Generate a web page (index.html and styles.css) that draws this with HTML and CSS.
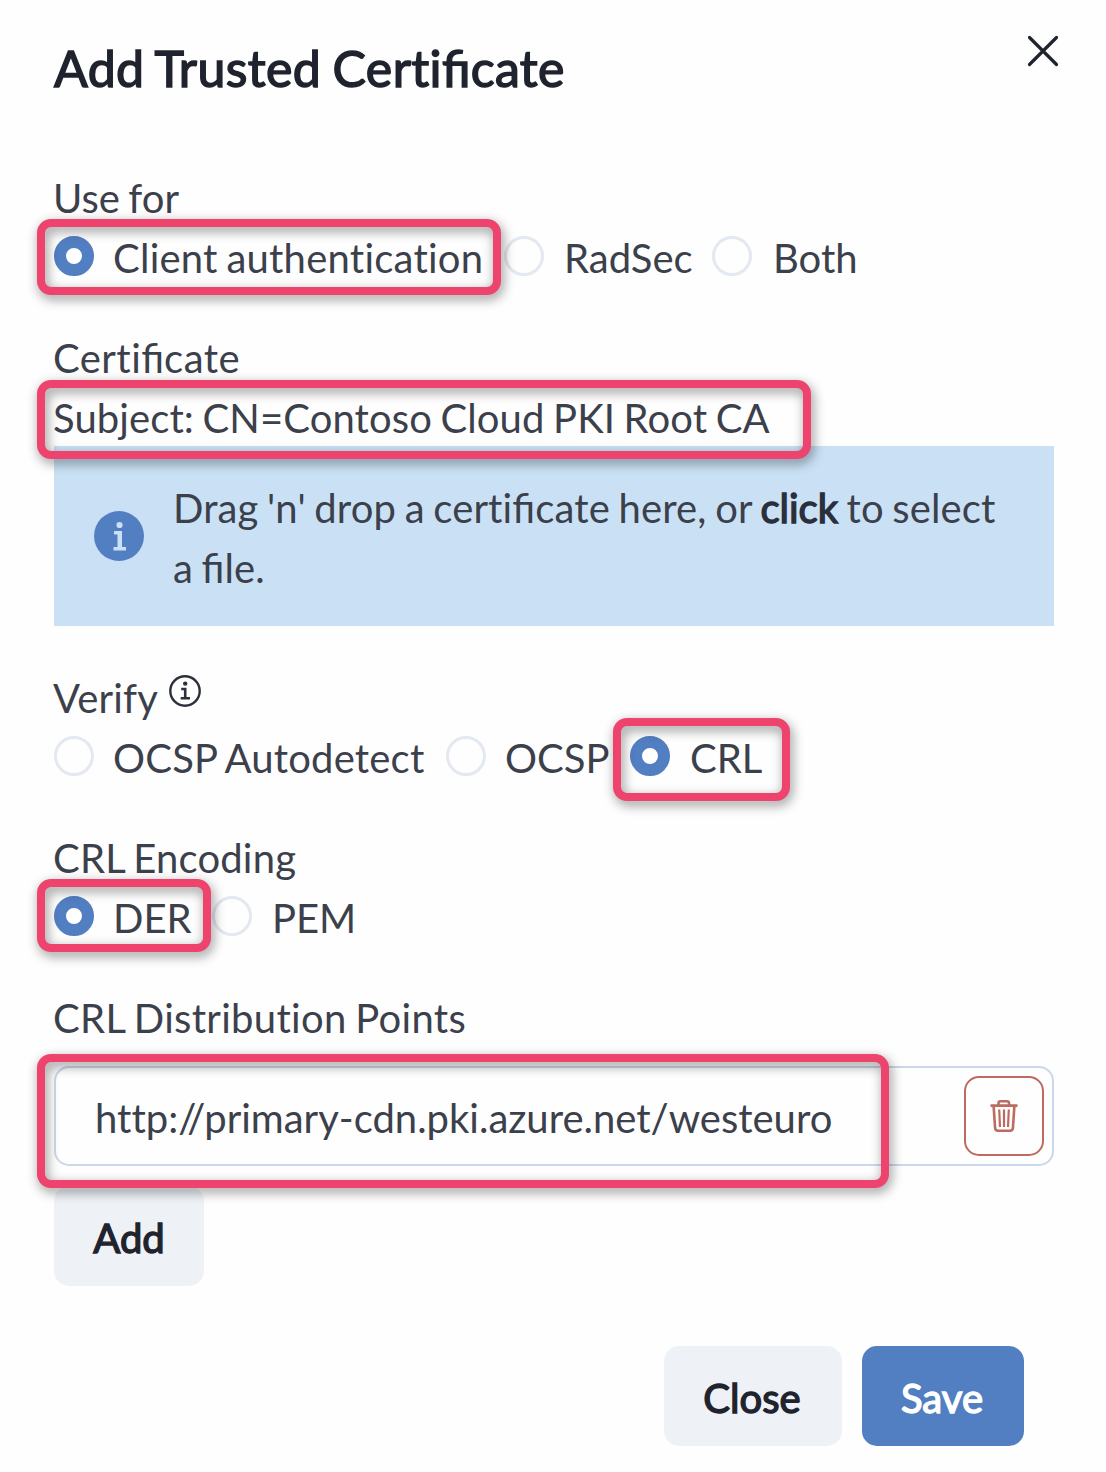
FILE: index.html
```html
<!DOCTYPE html>
<html lang="en">
<head>
<meta charset="utf-8">
<title>Add Trusted Certificate</title>
<link rel="stylesheet" href="styles.css">
</head>
<body>
<main class="dialog">
  <header class="header">
    <h1 class="title">Add Trusted Certi<span class="lig">fi</span>cate</h1>
    <button class="dismiss" aria-label="Close dialog">
      <svg width="32" height="32" viewBox="0 0 32 32"><path d="M2.500 2.500l27 27M29.500 2.500l-27 27"/></svg>
    </button>
  </header>

  <section class="group">
    <div class="label">Use for</div>
    <div class="options">
      <label class="option marked mark-client"><span class="radio on"></span><span class="text w-client">Client authentication</span></label>
      <label class="option"><span class="radio"></span><span class="text w-radsec">RadSec</span></label>
      <label class="option"><span class="radio"></span><span class="text both">Both</span></label>
    </div>
  </section>

  <section class="group">
    <div class="label"><span class="certificate">Certi<span class="lig">fi</span>cate</span></div>
    <div class="subject marked mark-subject">Subject: CN=Contoso Cloud PKI Root CA</div>
    <div class="dropzone">
      <svg class="info" width="50" height="50" viewBox="0 0 50 50"><circle cx="25" cy="25" r="25" fill="#527ec2"/><g fill="#cae1f5"><circle cx="25.500" cy="14" r="3.100"/><path d="M20 20h8v16h4v3.500H19.500V36h4V23.500H20z"/></g></svg>
      <p class="hint">Drag 'n' drop a certi<span class="lig">fi</span>cate here, or <b class="heavy">click</b> to select a <span class="lig">fi</span>le.</p>
    </div>
  </section>

  <section class="group">
    <div class="label verify">Verify <svg class="tip" width="32" height="32" viewBox="0 0 32 32"><circle cx="16" cy="16" r="14.700" fill="none" stroke="#2b303b" stroke-width="2.400"/><g fill="#2b303b"><circle cx="16.200" cy="8.600" r="2.200"/><path d="M12.200 12.800h5.300v9.300h3.500v2.400h-9.300v-2.400h3.200v-6.900h-2.700z"/></g></svg></div>
    <div class="options">
      <label class="option"><span class="radio"></span><span class="text w-auto">OCSP Autodetect</span></label>
      <label class="option"><span class="radio"></span><span class="text w-ocsp">OCSP</span></label>
      <label class="option marked mark-crl"><span class="radio on"></span><span class="text crl">CRL</span></label>
    </div>
  </section>

  <section class="group">
    <div class="label encoding">CRL Encoding</div>
    <div class="options">
      <label class="option marked mark-der"><span class="radio on"></span><span class="text w-der">DER</span></label>
      <label class="option"><span class="radio"></span><span class="text pem">PEM</span></label>
    </div>
  </section>

  <section class="group points">
    <div class="label">CRL Distribution Points</div>
    <div class="field marked mark-field">
      <div class="url">http://primary-cdn.pki.azure.net/westeuro</div>
      <button class="trash" aria-label="Remove">
        <svg width="28" height="32" viewBox="0 0 28 32" fill="none" stroke="#bd6a61" stroke-width="2.600"><path d="M.5 5.600h27M8.500 5V3.300Q8.500 1.300 10.500 1.300h6.500Q19 1.300 19 3.300V5M3.600 6l1.500 22Q5.300 30.700 8 30.700h12Q22.700 30.700 22.900 28L24.400 6"/><path stroke-width="2.200" d="M9.200 9.500l.8 17.500M14 9.500V27M18.800 9.500L18 27"/></svg>
      </button>
    </div>
    <button class="btn add">Add</button>
  </section>

  <footer class="footer">
    <button class="btn close">Close</button>
    <button class="btn save">Save</button>
  </footer>
</main>
</body>
</html>
```
FILE: styles.css
```css
*, *::before, *::after { box-sizing: border-box; }
body {
  margin: 0;
  background: #fefefe;
  color: #3b404b;
  font: 400 40px/60px Lato, sans-serif;
  font-variant-ligatures: none;
  word-spacing: -1.8px;
}
button { font: inherit; padding: 0; cursor: pointer; }
svg { display: block; flex: none; }
.lig { font-variant-ligatures: normal; letter-spacing: 0; }
.dialog {
  width: 1106px;
  height: 1472px;
  padding: 31px 52px 0 54px;
  overflow: hidden;
}
.header {
  display: flex;
  justify-content: space-between;
  height: 135px;
}
.title {
  margin: 0;
  color: #1f232e;
  font-size: 50px;
  font-weight: 400;
  line-height: 75px;
  letter-spacing: .4px;
  -webkit-text-stroke: 1.5px currentColor;
}
.dismiss {
  width: 32px;
  height: 32px;
  margin: 4px -5px 0 0;
  border: 0;
  background: none;
}
.dismiss svg { fill: none; stroke: #1f232e; stroke-width: 3.2; stroke-linecap: round; }
.group { margin-bottom: 40px; }
.label {
  display: flex;
  gap: 11px;
  height: 60px;
  margin-left: -1px;
  line-height: 64px;
  white-space: nowrap;
}
.certificate { letter-spacing: .45px; }
.verify, .encoding { letter-spacing: .18px; }
.tip { margin-top: 9px; }
.options { display: flex; gap: 20px; height: 60px; }
.option { display: flex; align-items: center; gap: 19px; white-space: nowrap; }
.text { padding-top: 4px; }
.radio {
  flex: none;
  width: 40px;
  height: 40px;
  border: 3px solid #e3e8f1;
  border-radius: 50%;
}
.radio.on { border: 12px solid #527ec2; background: #fff; }
.w-client { width: 371px; letter-spacing: .24px; }
.w-radsec { width: 129px; padding-left: 1px; }
.both { padding-left: 2px; }
.w-auto { width: 313px; letter-spacing: .2px; }
.w-ocsp { width: 105px; }
.crl, .pem { padding-left: 1px; }
.w-der { width: 79px; }
.subject {
  height: 60px;
  line-height: 64px;
  letter-spacing: .1px;
  text-indent: -1px;
  white-space: nowrap;
}
.dropzone {
  display: flex;
  align-items: center;
  gap: 29px;
  width: 1000px;
  height: 180px;
  padding: 0 40px;
  background: #cae1f5;
}
.hint { margin: 0; padding-top: 4px; letter-spacing: .14px; }
.heavy {
  color: #2a2f3b;
  font-weight: 400;
  letter-spacing: 0;
  -webkit-text-stroke: 1.4px currentColor;
}
.points .label { margin-bottom: 20px; letter-spacing: .31px; }
.field {
  display: flex;
  align-items: center;
  justify-content: space-between;
  width: 1000px;
  height: 100px;
  padding: 0 8px 0 39px;
  border: 2px solid #cbd7ea;
  border-radius: 15px;
}
.url { width: 738px; padding-top: 4px; overflow: hidden; white-space: nowrap; }
.trash {
  display: flex;
  align-items: center;
  justify-content: center;
  width: 80px;
  height: 80px;
  border: 2px solid #bd6a61;
  border-radius: 15px;
  background: none;
}
.btn {
  height: 100px;
  padding: 3px 2px 0 0;
  border: 0;
  border-radius: 15px;
  background: #eef2f7;
  color: #1f232e;
  -webkit-text-stroke: 1.4px currentColor;
}
.add { display: block; width: 150px; margin-top: 20px; padding-right: 0; }
.footer { display: flex; justify-content: flex-end; gap: 20px; margin: 60px 30px 0 0; }
.close { width: 178px; }
.save { width: 162px; background: #527ec2; color: #fff; }

/* Highlight frames drawn over the form controls */
.marked { position: relative; }
.marked::after {
  content: "";
  position: absolute;
  z-index: 1;
  border: 8px solid #ee436d;
  border-radius: 14px;
  filter: drop-shadow(2px 4px 6px rgba(0, 0, 0, .45));
  pointer-events: none;
}
.mark-client::after { left: -17px; top: -7px; width: 464px; height: 76px; }
.mark-subject::after { left: -17px; top: -6px; width: 774px; height: 79px; }
.mark-crl::after { left: -17px; top: -8px; width: 177px; height: 83px; }
.mark-der::after { left: -17px; top: -7px; width: 174px; height: 73px; }
.mark-field::after { left: -19px; top: -14px; width: 852px; height: 134px; }
```
